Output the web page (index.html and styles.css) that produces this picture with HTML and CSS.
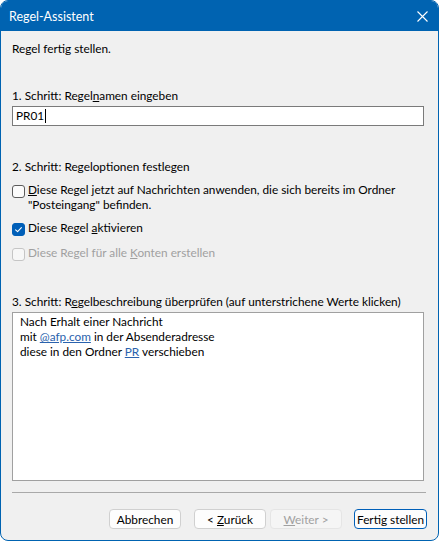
FILE: index.html
```html
<!DOCTYPE html>
<html lang="de">
<head>
<meta charset="utf-8">
<title>Regel-Assistent</title>
<link rel="stylesheet" href="styles.css">
</head>
<body>
<div class="window">
  <div class="titlebar">
    <span class="title">Regel-Assistent</span>
    <svg class="close" width="11" height="11" viewBox="0 0 11 11"><path d="M0.5 0.5 L10.5 10.5 M10.5 0.5 L0.5 10.5" stroke="#fff" stroke-width="1.1" fill="none"/></svg>
  </div>
  <div class="content">
    <p class="intro">Regel fertig stellen.</p>
    <p class="label step1">1. Schritt: Regel<u>n</u>amen eingeben</p>
    <div class="input">PR01<span class="caret"></span></div>
    <p class="label step2">2. Schritt: Regeloptionen festlegen</p>
    <div class="check row1">
      <span class="box"></span>
      <span class="ctext"><u>D</u>iese Regel jetzt auf Nachrichten anwenden, die sich bereits im Ordner<br>"Posteingang" befinden.</span>
    </div>
    <div class="check row2">
      <span class="box checked"><svg width="13" height="13" viewBox="0 0 13 13"><path d="M3.6 6.8 L5.6 8.7 L9.4 4.6" stroke="#fff" stroke-width="1.1" fill="none" stroke-linecap="round" stroke-linejoin="round"/></svg></span>
      <span class="ctext">Diese Regel <u>a</u>ktivieren</span>
    </div>
    <div class="check row3 disabled">
      <span class="box"></span>
      <span class="ctext">Diese Regel für alle <u>K</u>onten erstellen</span>
    </div>
    <p class="label step3">3. Schritt: R<u>e</u>gelbeschreibung überprüfen (auf unterstrichene Werte klicken)</p>
    <div class="desc">
      Nach Erhalt einer Nachricht<br>
      mit <a class="link">@afp.com</a> in der Absenderadresse<br>
      diese in den Ordner <a class="link">PR</a> verschieben
    </div>
    <div class="separator"></div>
    <div class="buttons">
      <button class="btn cancel">Abbrechen</button>
      <button class="btn back">&lt; <u>Z</u>urück</button>
      <button class="btn next" disabled><u>W</u>eiter &gt;</button>
      <button class="btn finish">Fertig stellen</button>
    </div>
  </div>
</div>
</body>
</html>
```

FILE: styles.css
```css
html, body {
  margin: 0;
  padding: 0;
  background: #ffffff;
}
body {
  font-family: Lato, "Noto Sans", sans-serif;
  font-size: 11.8px;
  line-height: 15px;
  color: #000;
}
.window {
  width: 439px;
  height: 541px;
  box-sizing: border-box;
  border: 1px solid #0063b1;
  border-radius: 8px;
  background: #f0f0f0;
  overflow: hidden;
  display: flex;
  flex-direction: column;
}
.titlebar {
  height: 30px;
  flex: none;
  background: #0063b1;
  display: flex;
  align-items: center;
  justify-content: space-between;
  padding: 0 10px 0 8px;
  color: #fff;
}
.title {
  font-size: 12.5px;
  margin-top: 1px;
}
.close {
  display: block;
  margin-top: 1px;
}
.content {
  padding: 0 11px;
  display: flex;
  flex-direction: column;
  white-space: nowrap;
}
p {
  margin: 0;
}
.intro {
  margin-top: 10px;
}
.step1 {
  margin-top: 32px;
}
.input {
  margin-top: 3px;
  width: 412px;
  height: 20px;
  box-sizing: border-box;
  border: 1px solid #7a7a7a;
  background: #fff;
  padding: 1px 3px;
  line-height: 16px;
  color: #000;
  display: flex;
  align-items: center;
}
.caret {
  display: inline-block;
  width: 1px;
  height: 14px;
  background: #000;
  margin-left: 1px;
}
.step2 {
  margin-top: 33px;
}
.check {
  display: flex;
  align-items: flex-start;
  gap: 3px;
}
.box {
  flex: none;
  width: 13px;
  height: 13px;
  box-sizing: border-box;
  border: 1px solid #5c5c5c;
  border-radius: 3px;
  background: #fbfbfb;
  margin-top: 3px;
  display: flex;
}
.box.checked {
  background: #005fb8;
  border-color: #005fb8;
}
.box svg {
  margin: -1px;
}
.row1 {
  margin-top: 8px;
}
.row2 {
  margin-top: 8px;
}
.row3 {
  margin-top: 9px;
}
.disabled .box {
  border-color: #c5c5c5;
  background: #f7f7f7;
}
.disabled .ctext {
  color: #a0a0a0;
}
.step3 {
  margin-top: 33px;
}
.desc {
  margin-top: 3px;
  width: 412px;
  height: 169px;
  box-sizing: border-box;
  border: 1px solid #a0a0a0;
  background: #fff;
  padding: 1px 7px;
  color: #000;
}
.link {
  color: #2a62ad;
  text-decoration: underline;
}
.separator {
  margin-top: 11px;
  width: 414px;
  height: 1px;
  background: #a9a9a9;
}
.buttons {
  margin-top: 16px;
  display: flex;
  justify-content: flex-end;
}
.btn {
  font-family: inherit;
  font-size: 11.8px;
  line-height: 15px;
  height: 20px;
  width: 72px;
  padding: 0;
  box-sizing: border-box;
  border: 1px solid #d0d0d0;
  border-radius: 4px;
  background: #fdfdfd;
  color: #000;
}
.cancel {
  margin-right: 13px;
}
.back {
  margin-right: 4px;
}
.next {
  margin-right: 12px;
  background: #f5f5f5;
  border-color: #e5e5e5;
  color: #a0a0a0;
}
.finish {
  width: 73px;
  border-color: #005fb8;
}
```
